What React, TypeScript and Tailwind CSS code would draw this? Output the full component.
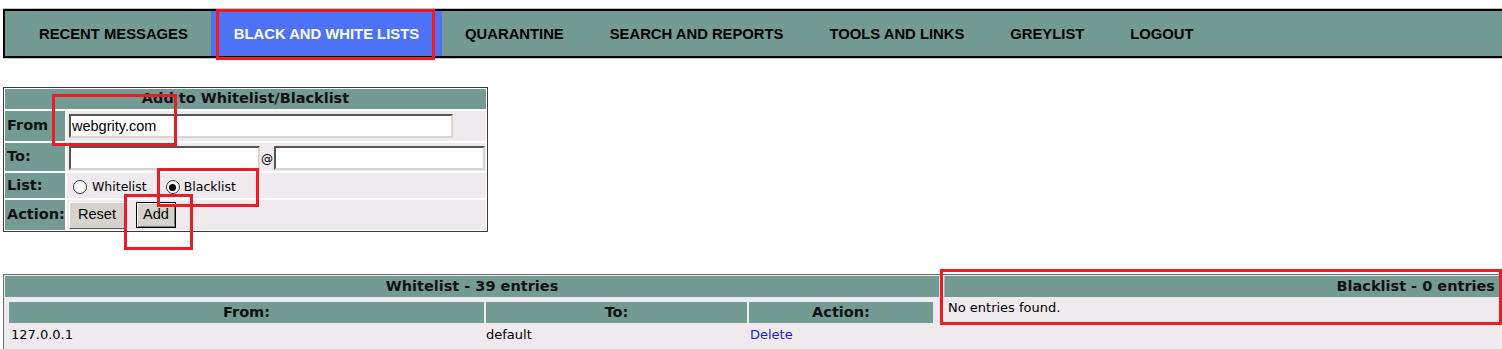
import { ReactNode } from "react";

const tabs = [
  "RECENT MESSAGES",
  "BLACK AND WHITE LISTS",
  "QUARANTINE",
  "SEARCH AND REPORTS",
  "TOOLS AND LINKS",
  "GREYLIST",
  "LOGOUT",
];

function Mark({ className }: { className: string }) {
  return <div className={`pointer-events-none absolute border-[3px] border-[#ec1c24] ${className}`} />;
}

function Label({ children }: { children: ReactNode }) {
  return (
    <div className="flex w-[60px] items-center bg-[#749a94] pl-[2px] text-[14.5px] font-bold text-[#111]">
      {children}
    </div>
  );
}

function Radio({ checked }: { checked?: boolean }) {
  return (
    <span className="flex h-[14px] w-[14px] items-center justify-center rounded-full border border-[#333] bg-white">
      {checked && <span className="h-[7px] w-[7px] rounded-full bg-black" />}
    </span>
  );
}

const field =
  "h-[24px] border-2 border-t-[#555] border-l-[#555] border-b-[#d8d5cf] border-r-[#d8d5cf] bg-white px-[1px] font-['Liberation_Sans',Arial,sans-serif] text-[14.5px] text-black outline-none";

export default function App() {
  return (
    <div className="relative min-h-screen overflow-hidden bg-white font-['DejaVu_Sans',Verdana,sans-serif] text-[#111]">
      {/* top menu */}
      <div className="ml-[3px] mt-[8px] border-y border-[#c4c4c4]">
        <div className="flex h-[49px] border-2 border-r-0 border-black bg-[#749a94] pl-[11px] font-['Liberation_Sans',Arial,sans-serif]">
          {tabs.map((t, i) => (
            <a
              key={t}
              className={`flex items-center px-[23px] pt-[2px] text-[14.8px] font-bold ${
                i === 1 ? "bg-[#4d72f5] text-white" : "text-black"
              }`}
            >
              {t}
            </a>
          ))}
        </div>
      </div>

      {/* add form */}
      <div className="ml-[3px] mt-[28px] w-[485px] border border-[#3c3c3c] bg-white p-px">
        <div className="flex h-[20px] items-center justify-center bg-[#749a94] text-[14.5px] font-bold">
          Add to Whitelist/Blacklist
        </div>
        <div className="mt-[2px] flex h-[30px] gap-[2px]">
          <Label>From</Label>
          <div className="flex flex-1 items-center bg-[#efeaee] pl-[2px]">
            <input readOnly value="webgrity.com" className={`${field} w-[384px]`} />
          </div>
        </div>
        <div className="mt-[2px] flex h-[28px] gap-[2px]">
          <Label>To:</Label>
          <div className="flex flex-1 items-end bg-[#efeaee] pb-px pl-[2px]">
            <input readOnly value="" className={`${field} w-[191px]`} />
            <span className="px-px pb-[2px] text-[12px] text-black">@</span>
            <input readOnly value="" className={`${field} w-[211px]`} />
          </div>
        </div>
        <div className="mt-[2px] flex h-[25px] gap-[2px]">
          <Label>List:</Label>
          <div className="flex flex-1 items-center bg-[#efeaee] pl-[6px] pt-[3px] text-[12.5px] text-black">
            <Radio />
            <span className="ml-[5px]">Whitelist</span>
            <span className="ml-[19px]">
              <Radio checked />
            </span>
            <span className="ml-[4px]">Blacklist</span>
          </div>
        </div>
        <div className="mt-[2px] flex h-[30px] gap-[2px]">
          <Label>Action:</Label>
          <div className="flex flex-1 items-center gap-[11px] bg-[#efeaee] pl-[2px] font-['Liberation_Sans',Arial,sans-serif] text-[14.5px] text-black">
            <button className="h-[27px] w-[56px] border border-t-white border-l-white border-b-[#555] border-r-[#555] bg-[#d6d2cc]">
              Reset
            </button>
            <button className="h-[26px] w-[40px] border border-black bg-[#d6d2cc] shadow-[inset_1px_1px_0_#fff,inset_-1px_-1px_0_#777]">
              Add
            </button>
          </div>
        </div>
      </div>

      {/* lists */}
      <div className="ml-[3px] mt-[42px] flex gap-[5px] border-l border-t border-[#6b6b6b] bg-[#efeaee] pl-px pt-px">
        <div className="w-[934px] shrink-0">
          <div className="flex h-[21px] items-center justify-center bg-[#749a94] text-[14.5px] font-bold">
            Whitelist - 39 entries
          </div>
          <div className="mt-[5px] flex gap-[2px] pl-[4px] text-[14.5px] font-bold">
            <div className="flex h-[21px] w-[475px] items-center justify-center bg-[#749a94]">From:</div>
            <div className="flex h-[21px] w-[261px] items-center justify-center bg-[#749a94]">To:</div>
            <div className="flex h-[21px] w-[184px] items-center justify-center bg-[#749a94]">Action:</div>
          </div>
          <div className="mt-[2px] flex h-[20px] items-center text-[13px] text-black">
            <span className="w-[481px] pl-[6px]">127.0.0.1</span>
            <span className="w-[264px]">default</span>
            <span className="text-[#1a1ae6]">Delete</span>
          </div>
          <div className="h-[10px]" />
        </div>
        <div className="flex-1">
          <div className="flex h-[21px] items-center justify-end border-l border-[#b5b5b5] bg-[#749a94] pr-[7px] text-[14.5px] font-bold">
            Blacklist - 0 entries
          </div>
          <div className="pl-[4px] pt-px text-[13px] text-black">No entries found.</div>
        </div>
      </div>

      <Mark className="left-[216px] top-[9px] h-[51px] w-[219px]" />
      <Mark className="left-[52px] top-[94px] h-[52px] w-[125px]" />
      <Mark className="left-[157px] top-[168px] h-[39px] w-[102px]" />
      <Mark className="left-[124px] top-[194px] h-[56px] w-[69px]" />
      <Mark className="left-[940px] top-[269px] h-[56px] w-[562px]" />
    </div>
  );
}
